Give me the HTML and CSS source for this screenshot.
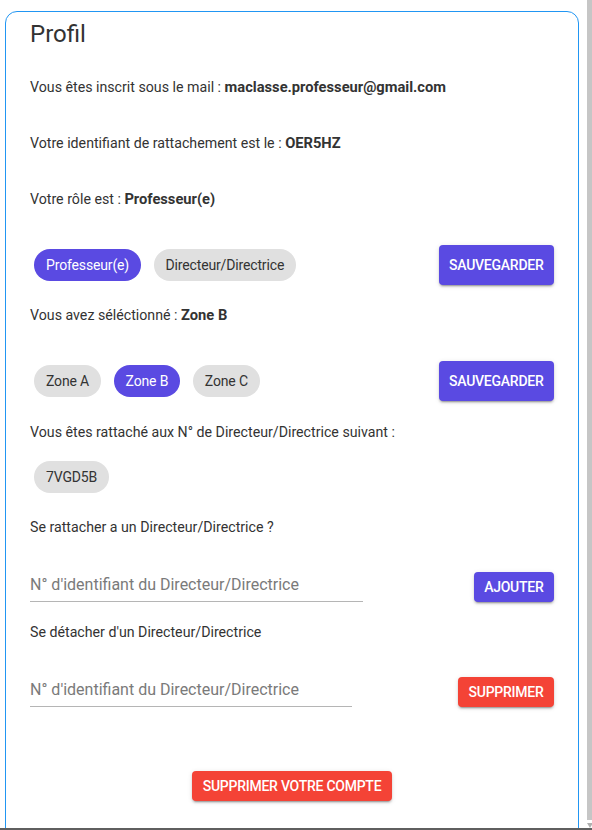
FILE: index.html
```html
<!DOCTYPE html>
<html lang="fr">
<head>
<meta charset="utf-8">
<title>Profil</title>
<link rel="stylesheet" href="styles.css">
</head>
<body>
<div class="page">
  <section class="card">
    <h1 class="title">Profil</h1>
    <p class="line l1">Vous êtes inscrit sous le mail : <b>maclasse.professeur@gmail.com</b></p>
    <p class="line l2">Votre identifiant de rattachement est le : <b>OER5HZ</b></p>
    <p class="line l3">Votre rôle est : <b>Professeur(e)</b></p>
    <div class="row r1">
      <div class="chips">
        <span class="chip active">Professeur(e)</span>
        <span class="chip">Directeur/Directrice</span>
      </div>
      <button class="btn primary big">SAUVEGARDER</button>
    </div>
    <p class="line l4">Vous avez séléctionné : <b>Zone B</b></p>
    <div class="row r2">
      <div class="chips">
        <span class="chip">Zone A</span>
        <span class="chip active">Zone B</span>
        <span class="chip">Zone C</span>
      </div>
      <button class="btn primary big">SAUVEGARDER</button>
    </div>
    <p class="line l5">Vous êtes rattaché aux N° de Directeur/Directrice suivant :</p>
    <div class="chips r3">
      <span class="chip">7VGD5B</span>
    </div>
    <p class="line l6">Se rattacher a un Directeur/Directrice ?</p>
    <div class="row input-row r4">
      <input class="field w1" type="text" placeholder="N° d'identifiant du Directeur/Directrice">
      <button class="btn primary small">AJOUTER</button>
    </div>
    <p class="line l7">Se détacher d'un Directeur/Directrice</p>
    <div class="row input-row r5">
      <input class="field w2" type="text" placeholder="N° d'identifiant du Directeur/Directrice">
      <button class="btn danger small">SUPPRIMER</button>
    </div>
    <div class="center r6">
      <button class="btn danger small">SUPPRIMER VOTRE COMPTE</button>
    </div>
  </section>
</div>
<div class="scrollbar"><span class="arrow"></span></div>
<div class="taskbar"></div>
</body>
</html>
```

FILE: styles.css
```css
html, body {
  margin: 0;
  padding: 0;
  height: 100%;
  overflow: hidden;
  background: #ffffff;
}
body {
  font-family: Roboto, "Liberation Sans", Arial, sans-serif;
  color: #333333;
}
.page {
  padding: 11px 0 0 5px;
}
.card {
  box-sizing: border-box;
  width: 574px;
  height: 900px;
  border: 1px solid #2196f3;
  border-radius: 12px;
  padding: 8px 24px 0 24px;
}
.title {
  margin: 0;
  font-size: 24px;
  line-height: 28px;
  font-weight: 400;
  color: #333333;
}
.line {
  margin: 0;
  font-size: 14.2px;
  line-height: 20px;
}
.line b {
  font-weight: 700;
  font-size: 14.7px;
}
.l1 { margin-top: 29px; }
.l2 { margin-top: 36px; }
.l3 { margin-top: 36px; }
.r1 { margin-top: 36px; }
.l4 { margin-top: 20px; }
.r2 { margin-top: 36px; }
.l5 { margin-top: 21px; }
.r3 { margin-top: 19px; }
.l6 { margin-top: 24px; }
.r4 { margin-top: 33px; }
.l7 { margin-top: 20px; }
.r5 { margin-top: 33px; }
.r6 { margin-top: 64px; }

.row {
  display: flex;
  justify-content: space-between;
  align-items: center;
  height: 40px;
}
.chips {
  display: flex;
  gap: 12.5px;
  padding-left: 4px;
}
.chip {
  display: inline-flex;
  align-items: center;
  height: 32px;
  padding: 0 12px;
  border-radius: 16px;
  background: #e0e0e0;
  color: #333333;
  font-size: 14px;
  letter-spacing: -0.15px;
}
.chip.active {
  background: #5a4ae2;
  color: #ffffff;
}
.btn {
  border: none;
  border-radius: 4px;
  color: #ffffff;
  font-family: Roboto, "Liberation Sans", Arial, sans-serif;
  font-weight: 500;
  font-size: 14px;
  letter-spacing: -0.25px;
  padding: 0 10.5px;
  box-shadow: 0 3px 1px -2px rgba(0,0,0,0.2), 0 2px 2px 0 rgba(0,0,0,0.14), 0 1px 5px 0 rgba(0,0,0,0.12);
  cursor: pointer;
}
.btn.big { height: 40px; }
.btn.small { height: 30px; }
.btn.primary { background: #5a4ae2; }
.btn.danger { background: #f44336; }
.input-row {
  align-items: flex-end;
  height: 32px;
}
.field {
  border: none;
  border-bottom: 1px solid #b5b5b5;
  outline: none;
  font-family: Roboto, "Liberation Sans", Arial, sans-serif;
  font-size: 16px;
  line-height: 21px;
  padding: 3px 0 6px 0;
  color: #333333;
  background: transparent;
}
.field::placeholder { color: #7a7a7a; }
.w1 { width: 333px; }
.w2 { width: 322px; }
.center {
  display: flex;
  justify-content: center;
}
.scrollbar {
  position: fixed;
  top: 0;
  right: 0;
  width: 5px;
  height: 820px;
  background: #c6c6c6;
}
.scrollbar .arrow {
  position: absolute;
  bottom: -8px;
  left: 0;
  width: 0;
  height: 0;
  border-left: 3px solid transparent;
  border-right: 3px solid transparent;
  border-top: 5px solid #b0b0b0;
}
.taskbar {
  position: fixed;
  left: 0;
  right: 0;
  bottom: 0;
  height: 2px;
  background: #5f5f5f;
}
```
